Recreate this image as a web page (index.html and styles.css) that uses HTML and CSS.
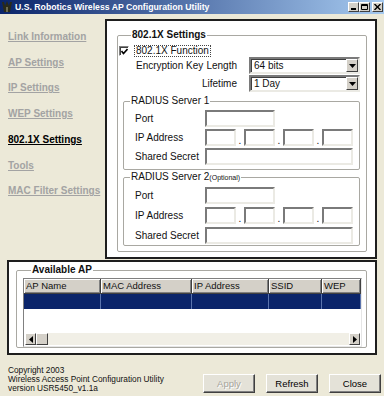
FILE: index.html
```html
<!DOCTYPE html>
<html lang="en">
<head>
<meta charset="UTF-8" />
<title>U.S. Robotics Wireless AP Configuration Utility</title>
<link rel="stylesheet" href="styles.css">
</head>
<body>

<div class="window">
  <div class="titlebar">
    <svg class="app-icon" viewBox="0 0 12 12" xmlns="http://www.w3.org/2000/svg">
      <path d="M1 1 L3 1 L4 5 L6 0 L8 5 L9 1 L11 1 L9 11 L3 11 Z" fill="#2a2a18" />
      <rect x="5" y="6" width="2" height="5" fill="#6a6a50" />
    </svg>
    <span class="title">U.S. Robotics Wireless AP Configuration Utility</span>
    <div class="win-buttons">
      <span class="win-btn">
        <svg viewBox="0 0 7 6" xmlns="http://www.w3.org/2000/svg"><rect x="1" y="4" width="5" height="2" /></svg>
      </span>
      <span class="win-btn">
        <svg viewBox="0 0 7 6" xmlns="http://www.w3.org/2000/svg"><path d="M0.5 0.5 H6.5 V5.5 H0.5 Z M0.5 1.5 H6.5" fill="none" stroke="#000" stroke-width="1" /></svg>
      </span>
      <span class="win-btn close">
        <svg viewBox="0 0 7 6" xmlns="http://www.w3.org/2000/svg"><path d="M0.5 0 L6.5 6 M6.5 0 L0.5 6" stroke="#000" stroke-width="1.4" /></svg>
      </span>
    </div>
  </div>

  <div class="main">
    <ul class="nav">
      <li><a href="#">Link Information</a></li>
      <li><a href="#">AP Settings</a></li>
      <li><a href="#">IP Settings</a></li>
      <li><a href="#">WEP Settings</a></li>
      <li><a href="#" class="current">802.1X Settings</a></li>
      <li><a href="#">Tools</a></li>
      <li><a href="#">MAC Filter Settings</a></li>
    </ul>

    <div class="panel">
      <fieldset class="group outer">
        <legend>802.1X Settings</legend>

        <div class="check-row">
          <span class="checkbox">
            <svg viewBox="0 0 7 7" xmlns="http://www.w3.org/2000/svg"><path d="M0.5 3 L2.5 5.5 L6.5 1" fill="none" stroke="#000" stroke-width="1.6" /></svg>
          </span>
          <span class="focus-label">802.1X Function</span>
        </div>

        <div class="sel-row">
          <span class="key-text">Encryption Key</span>
          <span class="sel-label">Length</span>
          <div class="select">
            <span class="sel-value">64 bits</span>
            <span class="drop"><svg viewBox="0 0 7 4" xmlns="http://www.w3.org/2000/svg"><path d="M0 0 H7 L3.5 4 Z" /></svg></span>
          </div>
        </div>
        <div class="sel-row">
          <span class="sel-label">Lifetime</span>
          <div class="select">
            <span class="sel-value">1 Day</span>
            <span class="drop"><svg viewBox="0 0 7 4" xmlns="http://www.w3.org/2000/svg"><path d="M0 0 H7 L3.5 4 Z" /></svg></span>
          </div>
        </div>

        <fieldset class="group radius">
          <legend>RADIUS Server 1</legend>
          <div class="field">
            <span class="field-label">Port</span>
            <span class="box port"></span>
          </div>
          <div class="field">
            <span class="field-label">IP Address</span>
            <span class="box octet"></span><span class="dot">.</span>
            <span class="box octet"></span><span class="dot">.</span>
            <span class="box octet"></span><span class="dot">.</span>
            <span class="box octet"></span>
          </div>
          <div class="field">
            <span class="field-label">Shared Secret</span>
            <span class="box secret"></span>
          </div>
        </fieldset>

        <fieldset class="group radius second">
          <legend>RADIUS Server 2<span class="opt">(Optional)</span></legend>
          <div class="field">
            <span class="field-label">Port</span>
            <span class="box port"></span>
          </div>
          <div class="field">
            <span class="field-label">IP Address</span>
            <span class="box octet"></span><span class="dot">.</span>
            <span class="box octet"></span><span class="dot">.</span>
            <span class="box octet"></span><span class="dot">.</span>
            <span class="box octet"></span>
          </div>
          <div class="field">
            <span class="field-label">Shared Secret</span>
            <span class="box secret"></span>
          </div>
        </fieldset>
      </fieldset>
    </div>
  </div>

  <div class="ap-panel">
    <fieldset class="group ap">
      <legend>Available AP</legend>
      <div class="listview">
        <div class="lv-head">
          <span class="c-name">AP Name</span>
          <span class="c-mac">MAC Address</span>
          <span class="c-ip">IP Address</span>
          <span class="c-ssid">SSID</span>
          <span class="c-wep">WEP</span>
        </div>
        <div class="lv-row selected">
          <span class="c-name"></span>
          <span class="c-mac"></span>
          <span class="c-ip"></span>
          <span class="c-ssid"></span>
          <span class="c-wep"></span>
        </div>
        <div class="lv-body"></div>
        <div class="hscroll">
          <span class="sb-btn">
            <svg viewBox="0 0 4 7" xmlns="http://www.w3.org/2000/svg"><path d="M4 0 V7 L0 3.5 Z" /></svg>
          </span>
          <span class="sb-btn thumb"></span>
          <span class="sb-track"></span>
          <span class="sb-btn">
            <svg viewBox="0 0 4 7" xmlns="http://www.w3.org/2000/svg"><path d="M0 0 V7 L4 3.5 Z" /></svg>
          </span>
        </div>
      </div>
    </fieldset>
  </div>

  <div class="footer">
    <div class="about">
      Copyright 2003<br>
      Wireless Access Point Configuration Utility<br>
      version USR5450_v1.1a
    </div>
    <div class="buttons">
      <button class="btn" disabled>Apply</button>
      <button class="btn">Refresh</button>
      <button class="btn">Close</button>
    </div>
  </div>
</div>

</body>
</html>
```

FILE: styles.css
```css
body {
  margin: 0;
  background: #ECE9D8;
  font-family: "Liberation Sans", Arial, sans-serif;
  color: #111;
}

.window {
  width: 384px;
  height: 396px;
  display: flex;
  flex-direction: column;
  overflow: hidden;
}

/* barra del titolo */
.titlebar {
  height: 14px;
  flex-shrink: 0;
  display: flex;
  align-items: center;
  background: linear-gradient(to right, #0A246A, #A6CAF0);
  color: #fff;
}

.app-icon {
  width: 12px;
  height: 12px;
  margin-left: 1px;
}

.title {
  margin-left: 2px;
  font-weight: bold;
  font-size: 8.7px;
  white-space: nowrap;
}

.win-buttons {
  margin-left: auto;
  margin-right: 1px;
  display: flex;
}

.win-btn {
  width: 11px;
  height: 10px;
  box-sizing: border-box;
  background: #D4D0C8;
  border: 1px solid;
  border-color: #fff #404040 #404040 #fff;
  display: flex;
  align-items: center;
  justify-content: center;
}

.win-btn svg {
  width: 7px;
  height: 6px;
}

.win-btn.close {
  margin-left: 2px;
}

/* area principale */
.main {
  height: 245px;
  flex-shrink: 0;
  display: flex;
}

.nav {
  width: 97px;
  margin: 0;
  padding: 10px 0 0 8px;
  list-style: none;
}

.nav li {
  line-height: 25.7px;
  font-size: 10px;
  font-weight: bold;
  white-space: nowrap;
}

.nav a {
  color: #a3a3a3;
  text-decoration: underline;
}

.nav a.current {
  color: #000;
}

.panel {
  margin-top: 5px;
  width: 272px;
  height: 240px;
  box-sizing: border-box;
  border: 2px solid #1e1e1e;
  background: #fff;
  padding: 8px 8px 0 10px;
}

fieldset.group {
  margin: 0;
  padding: 0;
  min-width: 0;
  border: 1px solid #a9a8a2;
  border-radius: 2px;
}

fieldset.group legend {
  padding: 0 1px;
  font-size: 10px;
  line-height: 12px;
}

fieldset.outer {
  padding-bottom: 5px;
}

.outer > legend {
  margin-left: 13px;
  font-weight: bold;
}

.check-row {
  display: flex;
  align-items: center;
  height: 12px;
  margin-top: 4px;
  font-size: 10px;
}

.checkbox {
  width: 10px;
  height: 10px;
  box-sizing: border-box;
  margin-left: 1px;
  border: 1px solid;
  border-color: #808080 #fff #fff #808080;
  box-shadow: inset 1px 1px #404040;
  background: #fff;
  display: flex;
  align-items: center;
  justify-content: center;
}

.checkbox svg {
  width: 7px;
  height: 7px;
}

.focus-label {
  margin-left: 5px;
  padding: 0 1px;
  border: 1px dotted #444;
  line-height: 10px;
}

.sel-row {
  display: flex;
  align-items: center;
  justify-content: flex-end;
  height: 17px;
  padding-right: 6px;
  font-size: 10px;
}

.sel-row + .sel-row {
  margin-top: 1px;
}

.key-text {
  margin-left: 18px;
  margin-right: auto;
}

.sel-label {
  margin-right: 12px;
}

.select {
  width: 111px;
  height: 17px;
  box-sizing: border-box;
  border: 2px solid;
  border-color: #7a7a7a #ebeae4 #ebeae4 #7a7a7a;
  box-shadow: inset 1px 1px #404040;
  background: #fff;
  display: flex;
  align-items: center;
}

.sel-value {
  padding-left: 3px;
}

.drop {
  margin-left: auto;
  width: 12px;
  height: 13px;
  box-sizing: border-box;
  background: #D4D0C8;
  border: 1px solid;
  border-color: #fff #404040 #404040 #fff;
  display: flex;
  align-items: center;
  justify-content: center;
}

.drop svg {
  width: 7px;
  height: 4px;
}

/* server RADIUS */
fieldset.radius {
  margin: 3px 6px 0 5px;
  padding-bottom: 4px;
}

.radius legend {
  margin-left: 6px;
}

.opt {
  font-size: 7px;
}

.field {
  display: flex;
  align-items: center;
  height: 17px;
  margin-top: 2px;
  font-size: 10px;
}

.radius legend + .field {
  margin-top: 3px;
}

.field-label {
  width: 70px;
  margin-left: 11px;
  white-space: nowrap;
}

.box {
  height: 17px;
  box-sizing: border-box;
  border: 2px solid;
  border-color: #7a7a7a #ebeae4 #ebeae4 #7a7a7a;
  background: #fff;
}

.port { width: 70px; }
.secret { width: 148px; }
.octet { width: 31px; }

.dot {
  width: 8px;
  align-self: flex-end;
  text-align: center;
  line-height: 10px;
}

fieldset.radius.second {
  margin-top: 1px;
  padding-bottom: 1px;
}

.radius.second .field {
  margin-top: 3px;
}

/* pannello AP disponibili */
.ap-panel {
  margin: 1px 0 0 7px;
  width: 370px;
  height: 95px;
  flex-shrink: 0;
  box-sizing: border-box;
  border: 2px solid #1e1e1e;
  background: #fff;
  padding: 2px 8px 0 7px;
}

.ap > legend {
  margin-left: 14px;
  font-weight: bold;
}

.listview {
  margin: 2px 4px 0 6px;
  height: 69px;
  box-sizing: border-box;
  border: 1px solid;
  border-color: #808080 #e6e6e6 #e6e6e6 #808080;
  display: flex;
  flex-direction: column;
  font-size: 9.5px;
}

.lv-head,
.lv-row {
  display: flex;
  height: 15px;
  flex-shrink: 0;
}

.lv-head span {
  box-sizing: border-box;
  background: #D4D0C8;
  border-right: 1px solid #404040;
  border-bottom: 1px solid #404040;
  box-shadow: inset 1px 1px #fff, inset -1px -1px #808080;
  padding-left: 2px;
  line-height: 14px;
  white-space: nowrap;
}

.lv-row.selected {
  background: #0A246A;
}

.lv-row span {
  box-sizing: border-box;
  border-right: 1px solid #5b74ad;
}

.c-name { width: 77px; }
.c-mac { width: 91px; }
.c-ip { width: 77px; }
.c-ssid { width: 53px; }
.c-wep { width: 39px; }

.lv-body {
  flex: 1;
}

.hscroll {
  height: 12px;
  margin: 0 1px 1px 1px;
  display: flex;
  background: #F1EFE6;
}

.sb-btn {
  width: 11px;
  height: 12px;
  box-sizing: border-box;
  background: #D4D0C8;
  border: 1px solid;
  border-color: #fff #404040 #404040 #fff;
  display: flex;
  align-items: center;
  justify-content: center;
}

.sb-btn svg {
  width: 4px;
  height: 7px;
}

.sb-btn.thumb {
  width: 12px;
}

.sb-track {
  flex: 1;
}

/* piede */
.footer {
  flex: 1;
  display: flex;
}

.about {
  margin: 11px 0 0 8px;
  font-size: 8.3px;
  line-height: 9px;
  white-space: nowrap;
}

.buttons {
  margin: 19px 3px 0 auto;
  display: flex;
  gap: 11px;
}

.btn {
  width: 52px;
  height: 19px;
  box-sizing: border-box;
  padding: 0;
  font-family: "Liberation Sans", Arial, sans-serif;
  font-size: 9.5px;
  color: #000;
  background: #E4E2D8;
  border: 1px solid;
  border-color: #fff #404040 #404040 #fff;
  box-shadow: inset -1px -1px #808080;
}

.btn:disabled {
  color: #a6a49b;
  text-shadow: 1px 1px #fff;
}
```
